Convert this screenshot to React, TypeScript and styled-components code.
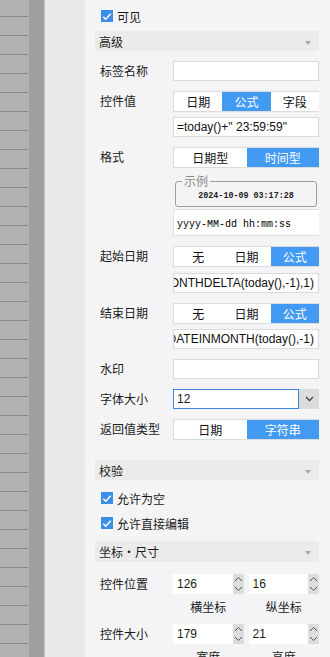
import styled, { createGlobalStyle } from "styled-components";

const GlobalStyle = createGlobalStyle`
  html, body {
    margin: 0;
    padding: 0;
    height: 100%;
    overflow: hidden;
  }
  body {
    font-family: "Noto Sans CJK SC", "Liberation Sans", sans-serif;
    font-size: 12px;
    color: #1a1a1a;
  }
`;

const BLUE = "#429af3";

function App() {
  return (
    <>
      <GlobalStyle />
      <Screen>
        <RowRuler />
        <Splitter />
        <Gutter />
        <Panel>
          <CheckRow>
            <CheckBox />
            可见
          </CheckRow>
          <SectionHeader>
            高级
            <Caret />
          </SectionHeader>

          <Fields>
            <FieldRow>
              <Label>标签名称</Label>
              <Control>
                <TextBox />
              </Control>
            </FieldRow>

            <FieldRow>
              <Label>控件值</Label>
              <Control $gap={5}>
                <Segmented options={["日期", "公式", "字段"]} active={1} />
                <TextBox>=today()+" 23:59:59"</TextBox>
              </Control>
            </FieldRow>

            <FieldRow>
              <Label>格式</Label>
              <Control>
                <Segmented options={["日期型", "时间型"]} active={1} />
                <Sample>
                  <legend>示例</legend>
                  <SampleText>2024-10-09 03:17:28</SampleText>
                </Sample>
                <PatternBox>yyyy-MM-dd hh:mm:ss</PatternBox>
              </Control>
            </FieldRow>

            <FieldRow>
              <Label>起始日期</Label>
              <Control $gap={6}>
                <Segmented options={["无", "日期", "公式"]} active={2} />
                <TextBox $tail>
                  <span>MONTHDELTA(today(),-1),1)</span>
                </TextBox>
              </Control>
            </FieldRow>

            <FieldRow>
              <Label>结束日期</Label>
              <Control $gap={5}>
                <Segmented options={["无", "日期", "公式"]} active={2} />
                <TextBox $tail>
                  <span>=DATEINMONTH(today(),-1)</span>
                </TextBox>
              </Control>
            </FieldRow>

            <FieldRow>
              <Label>水印</Label>
              <Control>
                <TextBox />
              </Control>
            </FieldRow>

            <FieldRow>
              <Label>字体大小</Label>
              <Control>
                <Combo>
                  <ComboInput>12</ComboInput>
                  <ComboButton>
                    <svg width="9" height="6" viewBox="0 0 9 6">
                      <path d="M1 1l3.5 3.5L8 1" fill="none" stroke="#444" strokeWidth="1.3" />
                    </svg>
                  </ComboButton>
                </Combo>
              </Control>
            </FieldRow>

            <FieldRow>
              <Label>返回值类型</Label>
              <Control>
                <Segmented options={["日期", "字符串"]} active={1} />
              </Control>
            </FieldRow>
          </Fields>

          <SectionHeader $top={20}>
            校验
            <Caret />
          </SectionHeader>
          <CheckList>
            <CheckRow>
              <CheckBox />
              允许为空
            </CheckRow>
            <CheckRow>
              <CheckBox />
              允许直接编辑
            </CheckRow>
          </CheckList>

          <SectionHeader $top={8} $height={21}>
            坐标・尺寸
            <Caret />
          </SectionHeader>

          <SpinFields>
            <FieldRow>
              <Label>控件位置</Label>
              <SpinPair>
                <Spin value="126" caption="横坐标" />
                <Spin value="16" caption="纵坐标" />
              </SpinPair>
            </FieldRow>
            <FieldRow>
              <Label>控件大小</Label>
              <SpinPair>
                <Spin value="179" caption="宽度" />
                <Spin value="21" caption="高度" />
              </SpinPair>
            </FieldRow>
          </SpinFields>
        </Panel>
      </Screen>
    </>
  );
}

function CheckBox() {
  return (
    <Tick>
      <svg width="13" height="13" viewBox="0 0 13 13">
        <path d="M2.5 6.8l2.6 2.6L10.6 3.4" fill="none" stroke="#fff" strokeWidth="1.6" />
      </svg>
    </Tick>
  );
}

function Segmented({ options, active }: { options: string[]; active: number }) {
  return (
    <SegGroup>
      {options.map((o, i) => (
        <Seg key={o} $on={i === active}>
          {o}
        </Seg>
      ))}
    </SegGroup>
  );
}

function Spin({ value, caption }: { value: string; caption: string }) {
  return (
    <SpinCol>
      <SpinBox>
        <SpinValue>{value}</SpinValue>
        <SpinButtons>
          <svg width="11" height="20" viewBox="0 0 11 20">
            <path d="M2 7l3.5-3.5L9 7" fill="none" stroke="#555" strokeWidth="1" />
            <path d="M2 13l3.5 3.5L9 13" fill="none" stroke="#555" strokeWidth="1" />
          </svg>
        </SpinButtons>
      </SpinBox>
      <SpinCaption>{caption}</SpinCaption>
    </SpinCol>
  );
}

const Screen = styled.div`
  display: flex;
  height: 657px;
  width: 330px;
  overflow: hidden;
`;

const RowRuler = styled.div`
  width: 29px;
  flex: none;
  background-color: #b2b2b2;
  background-image: repeating-linear-gradient(
    to bottom,
    transparent 0 18px,
    #8a8a8a 18px 19px
  );
  background-size: 28px 19px;
  background-repeat: repeat-y;
  background-position: 0 -2px;
`;

const Splitter = styled.div`
  width: 15px;
  flex: none;
  background: #9f9f9f;
  border-right: 1px solid #c4c4c4;
`;

const Gutter = styled.div`
  width: 40px;
  flex: none;
  background: #e8e8e8;
`;

const Panel = styled.div`
  flex: 1;
  background: #f4f4f6;
  padding: 6px 11px 0 10px;
  display: flex;
  flex-direction: column;
  min-width: 0;

  & > * {
    flex: none;
  }
`;

const CheckRow = styled.div`
  display: flex;
  align-items: center;
  height: 20px;
  padding-left: 6px;
  gap: 4px;
  font-size: 12px;
`;

const Tick = styled.span`
  width: 12px;
  height: 12px;
  background: #3a8ee8;
  display: flex;
  align-items: center;
  justify-content: center;
  overflow: hidden;
`;

const SectionHeader = styled.div<{ $top?: number; $height?: number }>`
  margin-top: ${(p) => p.$top ?? 5}px;
  height: ${(p) => p.$height ?? 20}px;
  background: #ebebeb;
  display: flex;
  align-items: center;
  justify-content: space-between;
  padding: 0 8px 0 4px;
  font-size: 12px;
`;

const Caret = styled.span`
  width: 0;
  height: 0;
  border-left: 3.5px solid transparent;
  border-right: 3.5px solid transparent;
  border-top: 4px solid #a9a9a9;
  margin-top: 3px;
`;

const Fields = styled.div`
  display: flex;
  flex-direction: column;
  gap: 10px;
  padding-top: 10px;
`;

const FieldRow = styled.div`
  display: flex;
  align-items: flex-start;
`;

const Label = styled.div`
  width: 78px;
  flex: none;
  padding-left: 5px;
  box-sizing: border-box;
  height: 20px;
  line-height: 20px;
  font-size: 12px;
`;

const Control = styled.div<{ $gap?: number }>`
  flex: 1;
  display: flex;
  flex-direction: column;
  gap: ${(p) => p.$gap ?? 0}px;
  min-width: 0;
`;

const TextBox = styled.div<{ $tail?: boolean }>`
  height: 20px;
  box-sizing: border-box;
  border: 1px solid #dadada;
  background: #fff;
  display: flex;
  align-items: center;
  justify-content: ${(p) => (p.$tail ? "flex-end" : "flex-start")};
  padding: 0 4px 0 3px;
  overflow: hidden;
  white-space: nowrap;
  font-family: "Liberation Sans", Arial, sans-serif;
  font-size: 12px;
  color: #111;
`;

const SegGroup = styled.div`
  display: flex;
  height: 21px;
  box-sizing: border-box;
  border: 1px solid #dcdcdc;
  border-right: none;
  background: #fff;
`;

const Seg = styled.div<{ $on: boolean }>`
  flex: 1;
  display: flex;
  align-items: center;
  justify-content: center;
  font-size: 12px;
  background: ${(p) => (p.$on ? BLUE : "#fff")};
  color: ${(p) => (p.$on ? "#fff" : "#111")};
`;

const Sample = styled.fieldset`
  margin: 7px 2px 2px 2px;
  padding: 0 4px 5px;
  height: 32px;
  box-sizing: border-box;
  border: 1px solid #9e9e9e;
  border-radius: 3px;
  display: flex;
  flex-direction: column;

  legend {
    padding: 0 2px;
    margin-left: 2px;
    font-size: 12px;
    line-height: 12px;
    color: #8c8c8c;
  }
`;

const SampleText = styled.div`
  text-align: center;
  font-family: "Liberation Mono", monospace;
  font-size: 8.4px;
  font-weight: bold;
  color: #222;
  margin-top: 4px;
`;

const PatternBox = styled.div`
  height: 27px;
  box-sizing: border-box;
  border: 1px solid #e0e0e0;
  border-right: none;
  background: #fff;
  display: flex;
  align-items: center;
  padding-left: 3px;
  padding-top: 4px;
  font-family: "Liberation Mono", monospace;
  font-size: 10px;
  color: #000;
`;

const Combo = styled.div`
  display: flex;
  height: 20px;
`;

const ComboInput = styled.div`
  flex: 1;
  box-sizing: border-box;
  border: 1px solid #3b87e2;
  background: #fff;
  display: flex;
  align-items: center;
  padding-left: 3px;
  font-family: "Liberation Sans", Arial, sans-serif;
  font-size: 12px;
`;

const ComboButton = styled.div`
  width: 20px;
  background: #dcdcdc;
  display: flex;
  align-items: center;
  justify-content: center;
`;

const CheckList = styled.div`
  display: flex;
  flex-direction: column;
  gap: 5px;
  padding-top: 8px;
`;

const SpinFields = styled.div`
  display: flex;
  flex-direction: column;
  gap: 8px;
  padding-top: 12px;
`;

const SpinPair = styled.div`
  flex: 1;
  display: flex;
  gap: 5px;
`;

const SpinCol = styled.div`
  flex: 1;
  display: flex;
  flex-direction: column;
  align-items: stretch;
`;

const SpinBox = styled.div`
  display: flex;
  height: 20px;
  background: #fff;
`;

const SpinValue = styled.div`
  flex: 1;
  display: flex;
  align-items: center;
  padding-left: 4px;
  font-family: "Liberation Sans", Arial, sans-serif;
  font-size: 12px;
`;

const SpinButtons = styled.div`
  width: 11px;
  background: #dcdcdc;
  display: flex;
`;

const SpinCaption = styled.div`
  height: 22px;
  padding-top: 3px;
  box-sizing: border-box;
  line-height: 19px;
  text-align: center;
  font-size: 12px;
`;

export default App;
